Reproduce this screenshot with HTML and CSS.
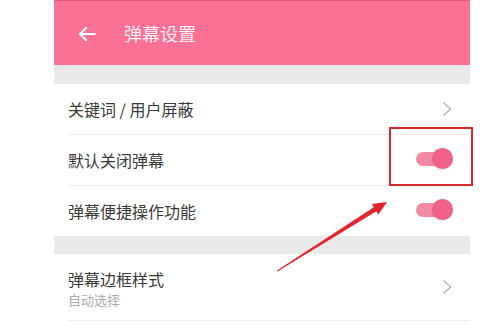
FILE: index.html
```html
<!DOCTYPE html>
<html lang="zh">
<head>
<meta charset="utf-8">
<link rel="stylesheet" href="styles.css">
</head>
<body>
<div class="panel">
  <header class="appbar">
    <svg class="back" width="18" height="14" viewBox="0 0 18 14"><path d="M17 7H2M8 1L2 7l6 6" fill="none" stroke="#fff" stroke-width="2" stroke-linecap="round" stroke-linejoin="round"/></svg>
    <h1 class="title">弹幕设置</h1>
  </header>
  <div class="gap"></div>
  <div class="row">
    <div class="row-inner">
      <span class="label">关键词 / 用户屏蔽</span>
      <svg class="chev" width="10" height="16" viewBox="0 0 10 16"><path d="M1.5 1.5L8.5 8l-7 6.5" fill="none" stroke="#b5b5b5" stroke-width="1.5"/></svg>
    </div>
  </div>
  <div class="row">
    <div class="row-inner">
      <span class="label">默认关闭弹幕</span>
      <span class="switch"><span class="track"></span><span class="knob"></span></span>
    </div>
  </div>
  <div class="row">
    <div class="row-inner last">
      <span class="label">弹幕便捷操作功能</span>
      <span class="switch"><span class="track"></span><span class="knob"></span></span>
    </div>
  </div>
  <div class="gap gap2"></div>
  <div class="row tall">
    <div class="row-inner">
      <div class="stack">
        <span class="label">弹幕边框样式</span>
        <span class="sub">自动选择</span>
      </div>
      <svg class="chev" width="10" height="16" viewBox="0 0 10 16"><path d="M1.5 1.5L8.5 8l-7 6.5" fill="none" stroke="#b5b5b5" stroke-width="1.5"/></svg>
    </div>
  </div>
</div>
<div class="highlight"></div>
<svg class="annot" width="500" height="333" viewBox="0 0 500 333"><polygon points="276.6,270.8 373.8,207.3 371.9,204.1 387,202 378.3,214.5 376.4,211.3 277.4,271.4" fill="#e4232a"/></svg>
</body>
</html>
```
FILE: styles.css
```css
html, body {
  margin: 0;
  padding: 0;
  background: #fff;
}
body {
  position: relative;
  width: 500px;
  height: 333px;
  overflow: hidden;
  font-family: "Noto Sans CJK SC", "Noto Sans", sans-serif;
}
.panel {
  margin-left: 54px;
  width: 416px;
}
.appbar {
  height: 65px;
  background: #fb7095;
  border-top: 1px solid #d95a7c;
  box-sizing: border-box;
  display: flex;
  align-items: center;
  padding-left: 24px;
}
.back {
  display: block;
  margin-top: 1px;
}
.title {
  margin: 0 0 0 28px;
  font-size: 18px;
  font-weight: 400;
  color: rgba(255, 255, 255, 0.92);
  line-height: 1;
}
.gap {
  height: 19px;
  background: #e9e9e9;
}
.gap2 {
  height: 18px;
}
.row {
  padding-left: 14px;
  background: #fff;
}
.row-inner {
  height: 50px;
  border-bottom: 1px solid #ececec;
  display: flex;
  align-items: center;
  justify-content: space-between;
  padding-right: 17px;
}
.row-inner.last {
  border-bottom: none;
}
.tall .row-inner {
  height: 66px;
}
.label {
  font-size: 16px;
  color: #3a3a3a;
  line-height: 18px;
}
.stack {
  display: flex;
  flex-direction: column;
  gap: 0;
  margin-top: 2px;
}
.stack .label {
  line-height: normal;
}
.sub {
  font-size: 13px;
  color: #ababab;
  line-height: normal;
  margin-top: -1px;
}
.chev {
  display: block;
  margin-right: 1px;
}
.switch {
  position: relative;
  width: 37px;
  height: 22px;
  margin-top: -2px;
}
.track {
  position: absolute;
  left: 0;
  top: 4px;
  width: 30px;
  height: 14px;
  border-radius: 7px;
  background: #f28aa6;
}
.knob {
  position: absolute;
  right: 0;
  top: 0;
  width: 21px;
  height: 21px;
  border-radius: 50%;
  background: #ef6189;
  box-shadow: 0 1px 2px rgba(0, 0, 0, 0.15);
}
.highlight {
  position: absolute;
  left: 389px;
  top: 127px;
  width: 80px;
  height: 55px;
  border: 2px solid #d8282a;
}
.annot {
  position: absolute;
  left: 0;
  top: 0;
}
```
